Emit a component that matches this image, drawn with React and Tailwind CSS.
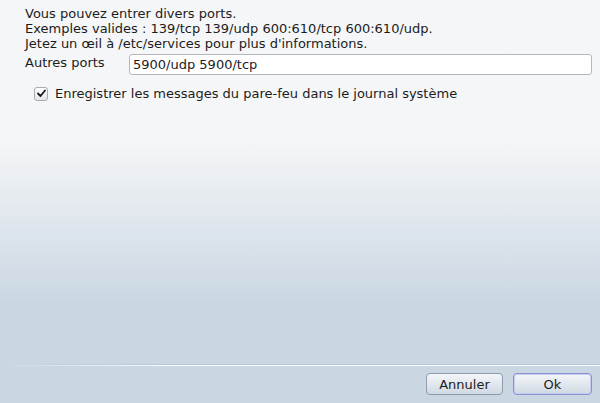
import React, { useState } from "react";

const Check = () => (
  <svg width="11" height="11" viewBox="0 0 11 11" fill="none">
    <path d="M2 5.5 L4.5 8 L9 2.5" stroke="#1a1a1a" strokeWidth="1.8" strokeLinecap="round" strokeLinejoin="round" />
  </svg>
);

const App = () => {
  const [ports, setPorts] = useState("5900/udp 5900/tcp");
  const [log, setLog] = useState(true);

  return (
    <div
      className="w-[600px] h-[403px] flex flex-col bg-gradient-to-b from-[#f5f6f7] from-[35%] to-[#cad7e3] to-[75%] text-[#1c1c1c] text-[13px] leading-[15px]"
      style={{ fontFamily: '"DejaVu Sans", sans-serif' }}
    >
      <div className="flex-1 pt-[6px] px-[25px]">
        <p>Vous pouvez entrer divers ports.</p>
        <p>Exemples valides : 139/tcp 139/udp 600:610/tcp 600:610/udp.</p>
        <p>Jetez un œil à /etc/services pour plus d'informations.</p>

        <div className="flex items-center mt-[3px]">
          <label className="w-[104px] -mt-[4px]">Autres ports</label>
          <input
            value={ports}
            onChange={(e) => setPorts(e.target.value)}
            className="flex-1 h-[21px] mr-[-17px] bg-white border border-[#b4b8bd] rounded-[3px] px-[3px] outline-none"
          />
        </div>

        <button
          onClick={() => setLog(!log)}
          className="flex items-center gap-[7px] ml-[9px] mt-[11px]"
        >
          <span className="w-[14px] h-[14px] flex items-center justify-center rounded-[3px] border border-[#a7acb2] bg-gradient-to-b from-white to-[#e3e7eb]">
            {log && <Check />}
          </span>
          <span>Enregistrer les messages du pare-feu dans le journal système</span>
        </button>
      </div>

      {/* separator */}
      <div className="h-[1px] bg-gradient-to-r from-transparent via-[#b2c7dc] via-[30%] to-[#b2c7dc]" />
      <div className="h-[1px] bg-gradient-to-r from-transparent via-white via-[30%] to-white" />

      <div className="flex justify-end gap-[10px] px-[8px] pt-[7px] pb-[8px]">
        <button className="w-[77px] h-[22px] rounded-[4px] border border-[#8f9cab] bg-gradient-to-b from-[#f4f6f8] to-[#cfd9e4] text-[13px]">
          Annuler
        </button>
        <button className="w-[79px] h-[22px] rounded-[4px] border border-[#8b90d3] bg-gradient-to-b from-[#f4f6f8] to-[#cfd9e4] text-[13px] shadow-[inset_0_0_0_1px_#c8cdf0]">
          Ok
        </button>
      </div>
    </div>
  );
};

export default App;
